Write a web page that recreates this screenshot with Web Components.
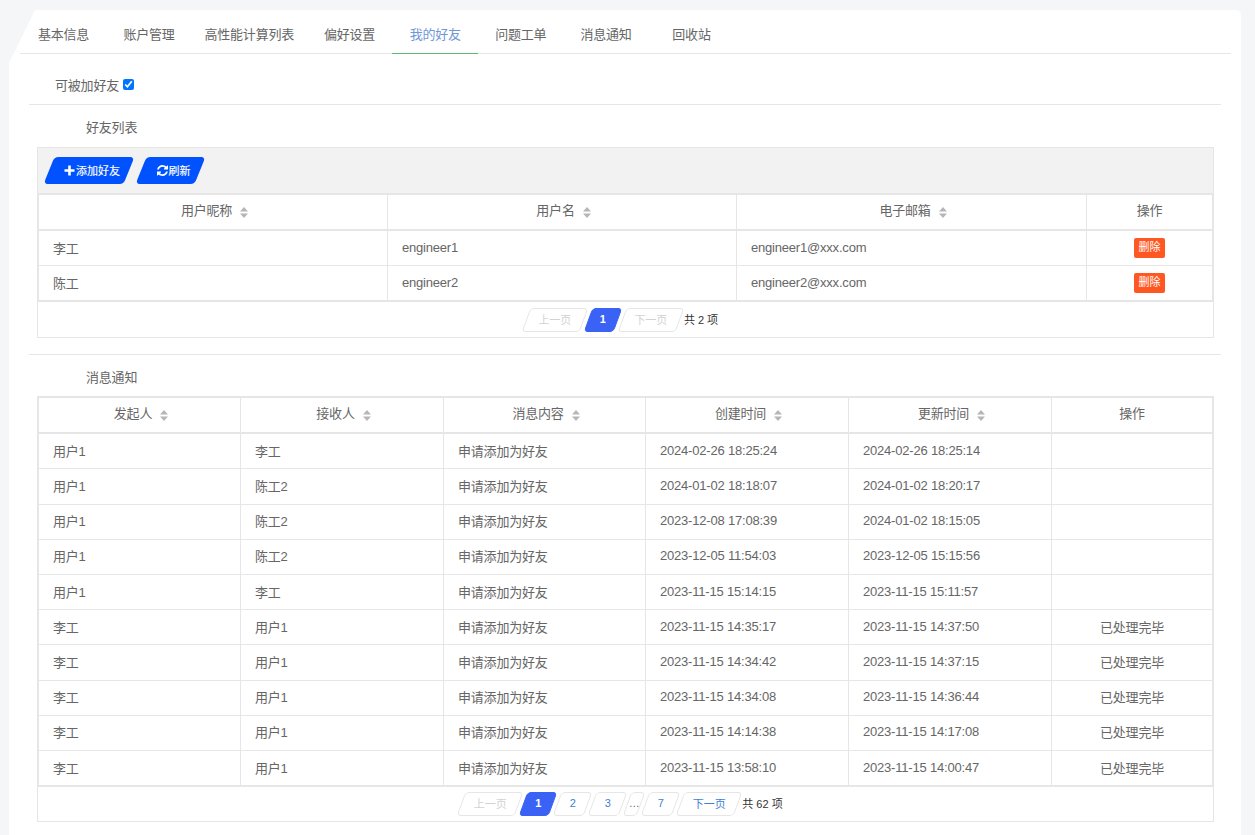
<!DOCTYPE html>
<html lang="zh-CN">
<head>
<meta charset="utf-8">
<title>我的好友</title>
<style>
  html, body {
    height: 100%;
    margin: 0;
    overflow: hidden;
    background: #f5f6f8;
    color: #666;
    font: 13px "Liberation Sans", "Noto Sans CJK SC", sans-serif;
    letter-spacing: -0.2px;
  }
</style>
</head>
<body>
<settings-card>
  <settings-tabs active="4"></settings-tabs>
  <setting-row>可被加好友<input slot="control" type="checkbox" checked></setting-row>
  <page-section label="好友列表">
    <table-box>
      <slot-bar slot="toolbar">
        <slant-button icon="plus" style="width:80px">添加好友</slant-button>
        <slant-button icon="refresh" style="width:59px">刷新</slant-button>
      </slot-bar>
      <data-table source="friends"></data-table>
      <page-bar slot="footer" pages="1" total="2"></page-bar>
    </table-box>
  </page-section>
  <page-section label="消息通知" last>
    <table-box>
      <data-table source="messages"></data-table>
      <page-bar slot="footer" pages="1,2,3,…,7" total="62" style="height:34px"></page-bar>
    </table-box>
  </page-section>
</settings-card>

<script>
const TABLES = {
  friends: {
    cols: '349px 349px 350px 125px',
    headHeight: 36,
    rowHeight: 35,
    head: [['用户昵称', 1], ['用户名', 1], ['电子邮箱', 1], ['操作', 0]],
    rows: [
      ['李工', 'engineer1', 'engineer1@xxx.com', '@delete'],
      ['陈工', 'engineer2', 'engineer2@xxx.com', '@delete'],
    ],
  },
  messages: {
    cols: '202px 203px 202px 203px 203px 160px',
    headHeight: 36.3,
    rowHeight: 35.2,
    head: [['发起人', 1], ['接收人', 1], ['消息内容', 1], ['创建时间', 1], ['更新时间', 1], ['操作', 0]],
    rows: [
      ['用户1', '李工', '申请添加为好友', '2024-02-26 18:25:24', '2024-02-26 18:25:14', ''],
      ['用户1', '陈工2', '申请添加为好友', '2024-01-02 18:18:07', '2024-01-02 18:20:17', ''],
      ['用户1', '陈工2', '申请添加为好友', '2023-12-08 17:08:39', '2024-01-02 18:15:05', ''],
      ['用户1', '陈工2', '申请添加为好友', '2023-12-05 11:54:03', '2023-12-05 15:15:56', ''],
      ['用户1', '李工', '申请添加为好友', '2023-11-15 15:14:15', '2023-11-15 15:11:57', ''],
      ['李工', '用户1', '申请添加为好友', '2023-11-15 14:35:17', '2023-11-15 14:37:50', '已处理完毕'],
      ['李工', '用户1', '申请添加为好友', '2023-11-15 14:34:42', '2023-11-15 14:37:15', '已处理完毕'],
      ['李工', '用户1', '申请添加为好友', '2023-11-15 14:34:08', '2023-11-15 14:36:44', '已处理完毕'],
      ['李工', '用户1', '申请添加为好友', '2023-11-15 14:14:38', '2023-11-15 14:17:08', '已处理完毕'],
      ['李工', '用户1', '申请添加为好友', '2023-11-15 13:58:10', '2023-11-15 14:00:47', '已处理完毕'],
    ],
  },
};

const TABS = [
  ['基本信息', 85.5], ['账户管理', 85.5], ['高性能计算列表', 115], ['偏好设置', 85.5],
  ['我的好友', 86], ['问题工单', 85], ['消息通知', 85.5], ['回收站', 85.5],
];

const ICONS = {
  plus: '<svg width="11" height="11" viewBox="0 0 11 11"><path fill="#fff" d="M4.2 0.5h2.6v3.7h3.7v2.6H6.8v3.7H4.2V6.8H0.5V4.2h3.7z"/></svg>',
  refresh: '<svg width="11" height="11" viewBox="128 128 1536 1536"><path fill="#fff" d="M1639 1056q0 5-1 7-64 268-268 434.5t-478 166.5q-146 0-282.5-55t-243.5-157l-129 129q-19 19-45 19t-45-19-19-45v-448q0-26 19-45t45-19h448q26 0 45 19t19 45-19 45l-137 137q71 66 161 102t187 36q134 0 250-65t186-179q11-17 53-117 8-23 30-23h192q13 0 22.5 9.5t9.5 22.5zm25-800v448q0 26-19 45t-45 19h-448q-26 0-45-19t-19-45 19-45l138-138q-148-137-349-137-134 0-250 65t-186 179q-11 17-53 117-8 23-30 23h-199q-13 0-22.5-9.5t-9.5-22.5v-7q65-268 270-434.5t480-166.5q146 0 284 55.5t245 156.5l130-129q19-19 45-19t45 19 19 45z"/></svg>',
};

class SettingsCard extends HTMLElement {
  connectedCallback() {
    this.attachShadow({ mode: 'open' });
    this.shadowRoot.innerHTML = `
      <style>
        :host {
          display: block;
          box-sizing: border-box;
          height: calc(100vh - 10px);
          margin: 10px 14px 0 9px;
          background: #fff;
          border-radius: 0 5px 0 0;
          clip-path: polygon(26px 0, 100% 0, 100% 100%, 0 100%, 0 53px);
        }
      </style>
      <slot></slot>
    `;
  }
}

class SettingsTabs extends HTMLElement {
  connectedCallback() {
    this.attachShadow({ mode: 'open' });
    const active = Number(this.getAttribute('active'));
    const tabs = TABS.map(([name, width], i) =>
      `<a class="tab${i === active ? ' on' : ''}" style="width:${width}px">${name}</a>`).join('');
    this.shadowRoot.innerHTML = `
      <style>
        :host {
          display: flex;
          height: 43px;
          margin: 0 10px 0 11px;
          border-bottom: 1px solid #e6e6e6;
        }
        .tab {
          box-sizing: border-box;
          height: 44px;
          padding: 3px 0 0 1.5px;
          display: flex;
          align-items: center;
          justify-content: center;
          color: #666;
          cursor: pointer;
        }
        .tab.on {
          color: #6f97d8;
          border-bottom: 1px solid #5fb878;
        }
      </style>
      ${tabs}
    `;
  }
}

class SettingRow extends HTMLElement {
  connectedCallback() {
    this.attachShadow({ mode: 'open' });
    this.shadowRoot.innerHTML = `
      <style>
        :host {
          display: flex;
          align-items: center;
          gap: 4px;
          box-sizing: border-box;
          height: 51px;
          margin: 0 20px;
          padding: 10px 0 0 26px;
          border-bottom: 1px solid #e6e6e6;
        }
        ::slotted(input) {
          width: 11px;
          height: 11px;
          margin: 0;
        }
      </style>
      <span><slot></slot></span>
      <slot name="control"></slot>
    `;
  }
}

class PageSection extends HTMLElement {
  connectedCallback() {
    this.attachShadow({ mode: 'open' });
    this.shadowRoot.innerHTML = `
      <style>
        :host {
          display: block;
          margin: 0 20px;
          padding-bottom: 16px;
          border-bottom: 1px solid #e6e6e6;
        }
        :host([last]) { border-bottom: 0; }
        h3 {
          box-sizing: border-box;
          display: flex;
          align-items: center;
          height: 42px;
          margin: 0;
          padding-left: 57px;
          font: inherit;
          color: #666;
        }
        :host([last]) h3 { height: 41px; padding-top: 1px; }
        .body { padding: 0 7px 0 8px; }
      </style>
      <h3>${this.getAttribute('label')}</h3>
      <div class="body"><slot></slot></div>
    `;
  }
}

class TableBox extends HTMLElement {
  connectedCallback() {
    this.attachShadow({ mode: 'open' });
    this.shadowRoot.innerHTML = `
      <style>
        :host {
          display: block;
          border: 1px solid #e6e6e6;
        }
      </style>
      <slot name="toolbar"></slot>
      <slot></slot>
      <slot name="footer"></slot>
    `;
  }
}

class SlotBar extends HTMLElement {
  connectedCallback() {
    this.attachShadow({ mode: 'open' });
    this.shadowRoot.innerHTML = `
      <style>
        :host {
          display: flex;
          align-items: center;
          gap: 12px;
          box-sizing: border-box;
          height: 46px;
          padding: 0 0 1px 11px;
          background: #f2f2f2;
          border-bottom: 1px solid #e6e6e6;
        }
      </style>
      <slot></slot>
    `;
  }
}

class SlantButton extends HTMLElement {
  connectedCallback() {
    this.attachShadow({ mode: 'open' });
    const icon = ICONS[this.getAttribute('icon')] || '';
    this.shadowRoot.innerHTML = `
      <style>
        :host {
          position: relative;
          box-sizing: border-box;
          display: inline-flex;
          align-items: center;
          justify-content: center;
          height: 27px;
          padding-left: 6px;
          color: #fff;
          font-size: 11px;
          letter-spacing: 0;
          cursor: pointer;
        }
        :host::before {
          content: "";
          position: absolute;
          inset: 0;
          background: #0052fe;
          border-radius: 4px;
          transform: skewX(-22deg);
        }
        span {
          position: relative;
          display: inline-flex;
          align-items: center;
          gap: 1px;
          -webkit-text-stroke: 0.15px #fff;
        }
        svg { display: block; }
      </style>
      <span>${icon}<slot></slot></span>
    `;
  }
}

class SortCaret extends HTMLElement {
  connectedCallback() {
    this.attachShadow({ mode: 'open' });
    this.shadowRoot.innerHTML = `
      <style>
        :host { display: inline-block; width: 8px; height: 11px; margin-top: 5px; }
        svg { display: block; }
      </style>
      <svg width="8" height="11" viewBox="0 0 8 11"><path fill="#b6b6b6" d="M4 0l4 4.5H0zM0 6.5h8L4 11z"/></svg>
    `;
  }
}

class DataTable extends HTMLElement {
  connectedCallback() {
    this.attachShadow({ mode: 'open' });
    const data = TABLES[this.getAttribute('source')];
    const last = data.head.length - 1;
    const head = data.head.map(([text, sort], i) =>
      `<div class="th${i === last ? ' end' : ''}${sort ? ' sort' : ''}">${text}${sort ? '<sort-caret></sort-caret>' : ''}</div>`).join('');
    const rows = data.rows.map((row) => row.map((cell, i) => {
      const inner = cell === '@delete' ? '<span class="del">删除</span>' : cell;
      return `<div class="td${i === last ? ' end' : ''}">${inner}</div>`;
    }).join('')).join('');
    this.shadowRoot.innerHTML = `
      <style>
        :host {
          display: grid;
          grid-template-columns: ${data.cols};
          grid-template-rows: ${data.headHeight}px;
          grid-auto-rows: ${data.rowHeight}px;
          border: 1px solid #e6e6e6;
          color: #666;
        }
        .th, .td {
          box-sizing: border-box;
          display: flex;
          align-items: center;
          padding: 0 14px 2px;
          border-right: 1px solid #e6e6e6;
          border-bottom: 1px solid #e6e6e6;
        }
        .th {
          gap: 8px;
          justify-content: center;
          border-bottom-width: 2px;
          padding-bottom: 5px;
        }
        .sort { padding-left: 17px; }
        .end { border-right: 0; justify-content: center; }
        .del {
          display: block;
          box-sizing: border-box;
          width: 31px;
          height: 20px;
          margin-top: 2px;
          line-height: 19px;
          text-align: center;
          letter-spacing: 0;
          background: #ff5722;
          border-radius: 2px;
          color: #fff;
          font-size: 11px;
        }
      </style>
      ${head}${rows}
    `;
  }
}

class PageBar extends HTMLElement {
  connectedCallback() {
    this.attachShadow({ mode: 'open' });
    const pages = this.getAttribute('pages').split(',');
    const more = pages.length > 1;
    const items = pages.map((p, i) => {
      if (p === '…') return '<a class="item gap"><span>…</span></a>';
      return `<a class="item num${i === 0 ? ' on' : ''}"><span>${p}</span></a>`;
    }).join('');
    this.shadowRoot.innerHTML = `
      <style>
        :host {
          display: flex;
          align-items: center;
          justify-content: center;
          gap: 4px;
          box-sizing: border-box;
          height: 35px;
          padding: 0 7px 0 0;
          font-size: 11px;
          letter-spacing: 0;
        }
        .item {
          position: relative;
          box-sizing: border-box;
          display: flex;
          align-items: center;
          justify-content: center;
          width: 58px;
          height: 24px;
          padding-bottom: 2px;
          color: #3d7fd6;
          cursor: pointer;
        }
        .item::before {
          content: "";
          position: absolute;
          inset: 0;
          box-sizing: border-box;
          background: #fff;
          border: 1px solid #e6e6e6;
          border-radius: 4px;
          transform: skewX(-20deg);
        }
        .item span { position: relative; }
        .num { width: 31px; }
        .gap { width: 14px; color: #666; }
        .num.on { width: 30px; color: #fff; font-weight: bold; }
        .num.on::before { background: #3a62f5; border-color: #3a62f5; }
        .off { color: #d2d2d2; cursor: default; }
        .total { color: #333; padding-bottom: 2px; }
      </style>
      <a class="item off"><span>上一页</span></a>
      ${items}
      <a class="item${more ? '' : ' off'}"><span>下一页</span></a>
      <span class="total">共 ${this.getAttribute('total')} 项</span>
    `;
  }
}

customElements.define('sort-caret', SortCaret);
customElements.define('settings-card', SettingsCard);
customElements.define('settings-tabs', SettingsTabs);
customElements.define('setting-row', SettingRow);
customElements.define('page-section', PageSection);
customElements.define('table-box', TableBox);
customElements.define('slot-bar', SlotBar);
customElements.define('slant-button', SlantButton);
customElements.define('data-table', DataTable);
customElements.define('page-bar', PageBar);
</script>
</body>
</html>
